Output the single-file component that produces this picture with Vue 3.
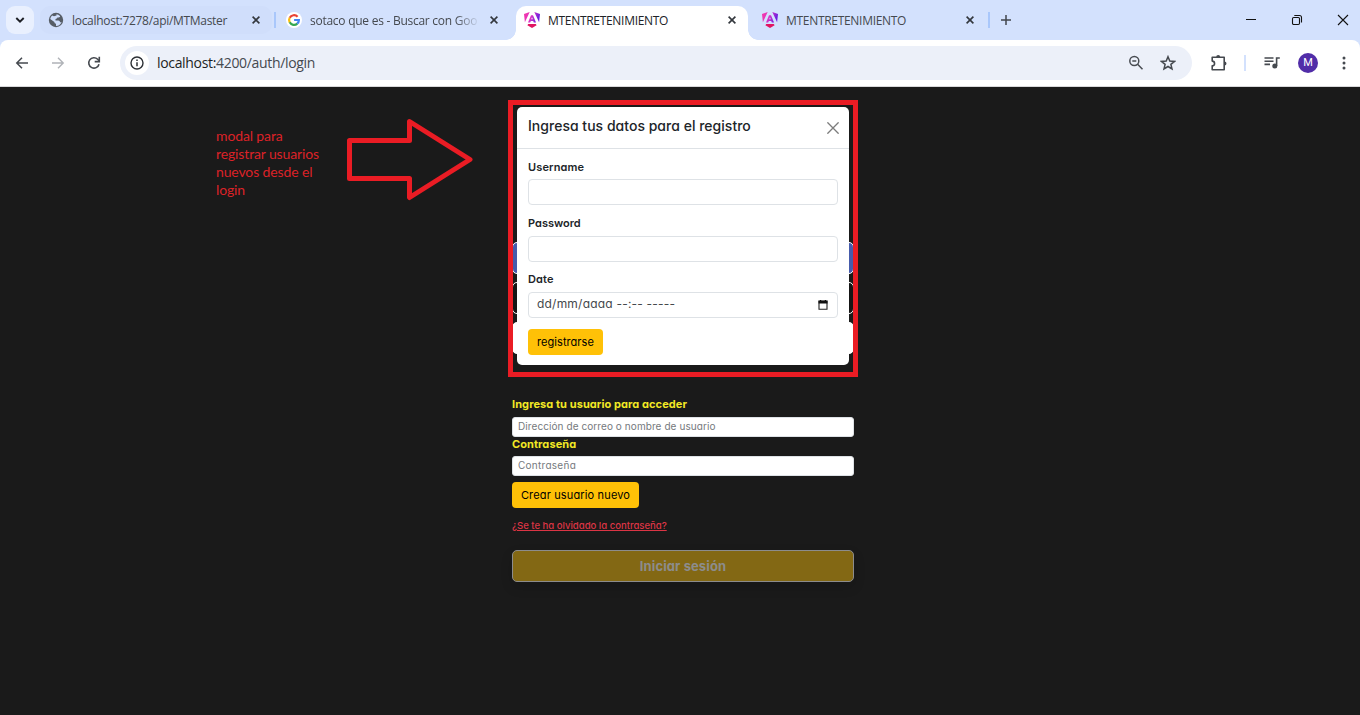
<script setup>
const tabs = [
  { icon: 'globe', title: 'localhost:7278/api/MTMaster', sep: true },
  { icon: 'google', title: 'sotaco que es - Buscar con Goo', fade: true },
  { icon: 'angular', title: 'MTENTRETENIMIENTO', active: true },
  { icon: 'angular', title: 'MTENTRETENIMIENTO', sep: true },
]
const modalFields = ['Username', 'Password']
</script>

<template>
  <div class="window">
    <svg class="defs" width="0" height="0">
      <defs>
        <linearGradient id="ngTop" x1="0" y1="0" x2="1" y2="0.3">
          <stop offset="0" stop-color="#f637a5" />
          <stop offset="0.5" stop-color="#e035c4" />
          <stop offset="1" stop-color="#6a20e0" />
        </linearGradient>
      </defs>
    </svg>
    <header class="strip">
      <button class="tab-search">
        <svg width="10" height="8" viewBox="0 0 10 8"><path d="M1.3 2 5 5.700 8.700 2" fill="none" stroke="#1c1f24" stroke-width="1.9" /></svg>
      </button>
      <div class="tabs">
        <div v-for="(t, i) in tabs" :key="i" class="tab" :class="{ active: t.active, hovered: i === 0, sep: t.sep }">
          <svg v-if="t.icon === 'globe'" class="fav" viewBox="0 0 16 16">
            <circle cx="8" cy="8" r="7.200" fill="#565d66" />
            <path d="M8.500 2.200c1 .1 2.600.8 3.600 1.900 0 1-.5 1.400-1.500 1.400H9.400c-.3 1-.9 1.400-1.900 1.400v1.500h2.700c1.300 0 1.800.9 1.800 1.900h1.600c-.6 1.400-2 2.900-3.700 3.500L8 13.900v-2.200c-1 0-1.600-.7-1.600-1.700L2.200 6.900c.3-1.300 1-2.500 1.900-3.300L6 4.200l2.500-.6z" fill="#cfdefc" />
          </svg>
          <svg v-else-if="t.icon === 'google'" class="fav" viewBox="0 0 16 16">
            <circle cx="8" cy="8" r="8" fill="#fff" />
            <g fill="none" stroke-width="2.200">
              <path d="M11.600 4.700A4.900 4.900 0 0 0 3.700 5.800" stroke="#ea4335" />
              <path d="M3.700 5.700A4.900 4.900 0 0 0 3.700 10.400" stroke="#fbbc05" />
              <path d="M3.700 10.300A4.900 4.900 0 0 0 11.300 11.600" stroke="#34a853" />
              <path d="M11.200 11.700A4.800 4.800 0 0 0 12.900 8H8.100" stroke="#4285f4" />
            </g>
          </svg>
          <svg v-else class="fav" viewBox="0 0 16 16">
            <path d="M5.700 0 0 2l.9 8.300zM10.300 0 16 2l-.9 8.300zM7 3.200 4 10.400h2.200l.6-1.500h2.400l.6 1.500H12L9 3.200zM8 5.200l.8 2.100H7.200z" fill="url(#ngTop)" fill-rule="evenodd" />
            <path d="M4.200 12h7.600l.8 1.300L8 16l-4.600-2.700z" fill="#e01563" />
          </svg>
          <span class="tab-title" :class="{ fade: t.fade }">{{ t.title }}</span>
          <svg class="close" width="8" height="8" viewBox="0 0 8 8"><path d="M.6.6 7.400 7.400M7.400.6.6 7.400" stroke="#33373d" stroke-width="1.600" /></svg>
        </div>
      </div>
      <svg class="plus" width="12" height="12" viewBox="0 0 12 12"><path d="M6 1v10M1 6h10" stroke="#42464c" stroke-width="1.500" /></svg>
      <div class="controls">
        <svg viewBox="0 0 12 12"><path d="M1 5.500h10" stroke="#111" /></svg>
        <svg viewBox="0 0 12 12"><rect x="1.500" y="3.500" width="7" height="7" rx="1.200" fill="none" stroke="#111" stroke-width="1.100" /><path d="M3.300 1.500h5.200a2 2 0 0 1 2 2v5" fill="none" stroke="#111" stroke-width="1.100" /></svg>
        <svg viewBox="0 0 12 12"><path d="M1 1l10 10M11 1 1 11" stroke="#111" stroke-width="1.100" /></svg>
      </div>
    </header>

    <div class="toolbar-back">
      <div class="toolbar">
        <div class="nav">
          <svg viewBox="0 0 16 16"><path d="M14 8H3M8 2.800 2.800 8 8 13.200" fill="none" stroke="#45494f" stroke-width="1.500" /></svg>
          <svg viewBox="0 0 16 16"><path d="M2 8h11M8 2.800 13.200 8 8 13.200" fill="none" stroke="#b0b3b8" stroke-width="1.400" /></svg>
          <svg viewBox="0 0 16 16"><path d="M13 9.200A5.200 5.200 0 1 1 11.700 4.300L13 5.700" fill="none" stroke="#45494f" stroke-width="1.600" /><path d="M13.300 1.800v4.800H8.700" fill="none" stroke="#45494f" stroke-width="1.600" /></svg>
        </div>
        <div class="omnibox">
          <span class="info">
            <svg width="14" height="14" viewBox="0 0 14 14"><circle cx="7" cy="7" r="6" fill="none" stroke="#2c3035" stroke-width="1.400" /><path d="M7 6.200v4M7 3.600v1.500" stroke="#2c3035" stroke-width="1.500" /></svg>
          </span>
          <span class="url"><b>localhost:</b>4200/auth/login</span>
          <svg class="lens" width="16" height="16" viewBox="0 0 16 16"><circle cx="6.300" cy="6" r="4.500" fill="none" stroke="#484c52" stroke-width="1.500" /><path d="M4.300 6h4M9.600 9.300l4.900 4.900" stroke="#484c52" stroke-width="1.500" /></svg>
          <svg class="star" width="16" height="16" viewBox="0 0 16 16"><path d="M8 1.700 9.800 6l4.700.4-3.600 3 1.100 4.600L8 11.500 4 14l1.100-4.600-3.600-3L6.200 6z" fill="none" stroke="#45494f" stroke-width="1.500" /></svg>
        </div>
        <svg class="puzzle" width="18" height="18" viewBox="0 0 18 18"><path d="M2.200 3.200H14.200V15.700H2.200V11.800A2.300 2.300 0 0 0 2.200 7.100z" fill="none" stroke="#45494f" stroke-width="1.600" stroke-linejoin="round" /><path d="M6.200 3a2 2 0 0 1 4 0zM14.500 7.400a2 2 0 0 1 0 4z" fill="#45494f" /></svg>
        <i class="divider"></i>
        <svg class="queue" width="16" height="14" viewBox="0 0 16 14"><path d="M.5 2h9M.5 5.200h9M.5 8.400h5.500M12.600 10V2h3.200" fill="none" stroke="#45494f" stroke-width="1.600" /><circle cx="10.800" cy="9.900" r="2.500" fill="#45494f" /></svg>
        <span class="avatar">M</span>
        <svg class="dots" width="4" height="16" viewBox="0 0 4 16" fill="#45494f"><circle cx="2" cy="3" r="1.500" /><circle cx="2" cy="8" r="1.500" /><circle cx="2" cy="13" r="1.500" /></svg>
      </div>
    </div>

    <main class="page">
      <form class="login" @submit.prevent>
        <div class="social blue"></div>
        <div class="social"></div>
        <div class="social white"></div>
        <label class="user-label">Ingresa tu usuario para acceder</label>
        <input class="user-input" placeholder="Dirección de correo o nombre de usuario" />
        <label class="pass-label">Contraseña</label>
        <input class="pass-input" placeholder="Contraseña" />
        <button class="yellow create">Crear usuario nuevo</button>
        <a class="forgot">¿Se te ha olvidado la contraseña?</a>
        <button class="submit">Iniciar sesión</button>
      </form>

      <section class="modal">
        <div class="modal-head">
          <h5>Ingresa tus datos para el registro</h5>
          <svg width="12" height="12" viewBox="0 0 12 12"><path d="M.8.8l10.400 10.400M11.200.8.8 11.200" stroke="#7c7c7c" stroke-width="1.300" stroke-linecap="round" /></svg>
        </div>
        <div class="modal-body">
          <div v-for="f in modalFields" :key="f" class="field">
            <label :class="f.toLowerCase()">{{ f }}</label>
            <div class="box"></div>
          </div>
          <div class="field">
            <label>Date</label>
            <div class="box">
              <span class="date">dd/mm/aaaa --:-- -----</span>
              <svg width="10" height="10" viewBox="0 0 10 10"><path d="M1 1h8v8.200H1z" fill="none" stroke="#222" stroke-width="1.100" /><path d="M.5.8h9v2.600h-9zM2 0h1.200v1H2zM6.800 0H8v1H6.800z" fill="#111" /></svg>
            </div>
          </div>
          <button class="yellow register">registrarse</button>
        </div>
      </section>

      <div class="frame"></div>
      <p class="note">modal para registrar usuarios nuevos desde el login</p>
      <svg class="arrow" width="128" height="84" viewBox="0 0 128 84"><path d="M3.500 23.500H63.500V4.500L124 42.500 63.500 80.500V61.500H3.500z" transform="translate(0 -1)" fill="none" stroke="#ea1c24" stroke-width="5" stroke-linejoin="round" /></svg>
    </main>
  </div>
</template>

<style>
body { margin: 0; overflow: hidden; background: #1a1a1a; }
</style>
<style scoped>
* { box-sizing: border-box; }
.window { width: 1360px; height: 715px; display: flex; flex-direction: column; font-family: "Open Sans", sans-serif; }
.defs { position: absolute; }
button { border: 0; padding: 0; margin: 0; }
.strip { height: 40px; background: #d3e1fd; display: flex; align-items: center; padding-left: 6px; flex: none; }
.tab-search { width: 28px; height: 28px; border-radius: 9px; background: #e9f0fe; display: flex; align-items: center; justify-content: center; margin-right: 6px; }
.tabs { display: flex; gap: 6px; align-self: stretch; padding-top: 6px; }
.tab { position: relative; width: 232px; height: 28px; display: flex; align-items: center; padding: 0 12px 0 8px; border-radius: 10px; }
.tab.hovered { background: #d0defb; }
.tab.active { height: 34px; background: #fff; border-radius: 10px 10px 0 0; padding-bottom: 6px; }
.tab.active::before, .tab.active::after { content: ""; position: absolute; bottom: 0; width: 10px; height: 10px; }
.tab.active::before { left: -10px; background: radial-gradient(circle at 0 0, transparent 9.500px, #fff 10px); }
.tab.active::after { right: -10px; background: radial-gradient(circle at 100% 0, transparent 9.500px, #fff 10px); }
.tab.sep::after { content: ""; position: absolute; right: -4px; top: 6px; width: 2px; height: 16px; background: #a9c7fb; }
.fav { width: 16px; height: 16px; flex: none; margin-right: 8px; }
.tab-title { flex: none; width: 168px; white-space: nowrap; font-size: 12px; line-height: 20px; padding-top: 2px; letter-spacing: -0.300px; color: #45494f; }
.tab-title.fade { letter-spacing: -0.260px; -webkit-mask-image: linear-gradient(90deg, #000 145px, transparent 170px); mask-image: linear-gradient(90deg, #000 145px, transparent 170px); }
.active .tab-title { color: #202327; }
.close { margin-left: auto; }
.plus { margin-left: 14px; }
.controls { margin-left: auto; display: flex; gap: 34px; padding-right: 11px; }
.controls svg { width: 12px; height: 12px; }
.toolbar-back { background: #d3e1fd; flex: none; }
.toolbar { height: 47px; padding-bottom: 1px; background: #fff; border-radius: 8px 8px 0 0; display: flex; align-items: center; border-bottom: 1px solid #d8d8da; }
.nav { display: flex; gap: 20px; padding-left: 14px; width: 120px; }
.nav svg { width: 16px; height: 16px; flex: none; }
.omnibox { width: 1072px; height: 34px; border-radius: 17px; background: #ecf0f9; display: flex; align-items: center; padding-left: 5px; }
.info { width: 24px; height: 24px; border-radius: 50%; background: #fff; display: flex; align-items: center; justify-content: center; }
.url { margin-left: 8px; font-size: 14px; letter-spacing: -0.330px; color: #45494f; white-space: nowrap; }
.url b { font-weight: 400; color: #1c1f24; }
.lens { margin-left: auto; }
.star { margin: 0 16px; }
.puzzle { margin-left: 18px; }
.divider { width: 2px; height: 16px; background: #d3e1fd; margin-left: 16px; }
.queue { margin-left: 18px; }
.avatar { margin-left: 18px; width: 20px; height: 20px; border-radius: 50%; background: #512da8; color: #fff; font: 11px/20px Roboto, sans-serif; text-align: center; }
.dots { margin-left: 24px; }

.page { position: relative; flex: 1; background: #1a1a1a; font-family: Inter, sans-serif; font-feature-settings: "cv11"; }
.login { width: 342px; margin-left: 512px; padding-top: 155px; display: flex; flex-direction: column; }
.social { height: 32px; margin-bottom: 8px; border: 1px solid #fff; border-radius: 5px; background: #151515; }
.social.blue { background: #465bab; }
.social.white { background: #fff; margin-bottom: 0; }
.login label { font-size: 11px; font-weight: 700; letter-spacing: 0.080px; line-height: 16px; color: #f2e925; }
.user-label { margin-top: 42px; }
.user-input { margin-top: 5px; }
.login input { font: inherit; font-size: 10px; letter-spacing: 0.080px; height: 20px; border: 1px solid #dee2e6; border-radius: 3px; padding: 0 5px 2px; background: #fff; }
.login input::placeholder { color: #75797d; }
.pass-label { margin-top: -1px; }
.pass-input { margin-top: 4px; }
.login input.pass-input { letter-spacing: 0.270px; }
.yellow { font: 400 11px/26px Inter, sans-serif; font-feature-settings: "cv11"; height: 26px; background: #ffc107; color: #000; border-radius: 4px; white-space: nowrap; }
.create { width: 127px; margin-top: 6px; letter-spacing: 0.150px; line-height: 26px; }
.forgot { margin-top: 11px; font-size: 9.600px; line-height: 14px; font-weight: 500; letter-spacing: -0.030px; color: #dc3545; text-decoration: underline; }
.submit { margin-top: 17px; height: 32px; border: 1px solid #8c8c8c; border-radius: 5px; background: #836814; color: #8c8c8c; font: 700 13px/30px Inter, sans-serif; font-feature-settings: "cv11"; letter-spacing: 0.100px; box-shadow: 0 5px 12px rgba(0, 0, 0, 0.150); }

.modal { position: absolute; left: 517px; top: 20px; width: 332px; height: 258px; background: #fff; border-radius: 5px; color: #212529; }
.modal-head { height: 42px; border-bottom: 1px solid #dee2e6; display: flex; align-items: center; justify-content: space-between; padding: 0 10px 0 11px; }
h5 { margin: 0; font-size: 14px; font-weight: 500; letter-spacing: 0.020px; line-height: 20px; padding-bottom: 3px; }
.modal-body { padding: 10px 11px 11px; }
.field { height: 57px; }
.field label { display: block; font-size: 11px; font-weight: 600; line-height: 16px; letter-spacing: 0.130px; margin-bottom: 4px; }
.field label.password { letter-spacing: 0; }
.box { height: 26px; border: 1px solid #dee2e6; border-radius: 4px; display: flex; align-items: center; justify-content: space-between; padding: 0 9px 0 8px; }
.field:nth-child(n + 2) label { line-height: 15px; margin-bottom: 5px; }
.field:nth-child(2) { height: 56px; }
.date { font-size: 12px; letter-spacing: 0.210px; color: #44484c; padding-bottom: 3px; white-space: nowrap; }
.register { display: block; width: 75px; letter-spacing: 0.050px; }
.frame { position: absolute; left: 508px; top: 13px; width: 350px; height: 277px; border: 5px solid #ea1c24; }
.note { position: absolute; left: 216px; top: 40px; width: 112px; margin: 0; font: 14px/18px Lato, sans-serif; letter-spacing: -0.130px; color: #dc2228; }
.arrow { position: absolute; left: 346px; top: 31px; }
</style>
